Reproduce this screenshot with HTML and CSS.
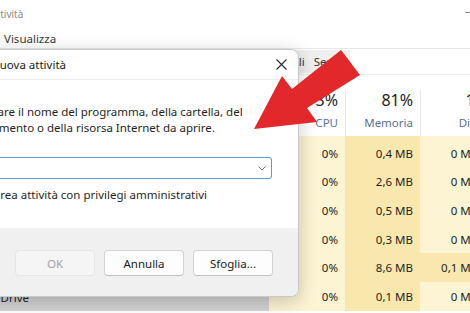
FILE: index.html
```html
<!DOCTYPE html>
<html>
<head>
    <meta charset="utf-8">
    <link rel="stylesheet" href="styles.css">
</head>
<body>
    <div class="screen">
        <div class="taskmgr">
            <div class="titlebar">
                <span class="app-title">attività</span>
                <span class="win-min"></span>
            </div>
            <div class="menubar">
                <span class="menu-item">Visualizza</span>
            </div>
            <div class="tabs">
                <div class="tab-group">
                    <span class="tab">Dettagli</span>
                    <span class="tab">Servizi</span>
                </div>
            </div>
            <div class="proc-table">
                <div class="row head">
                    <div class="cell name"></div>
                    <div class="cell"><span class="pct">3%</span><span class="label">CPU</span></div>
                    <div class="cell"><span class="pct">81%</span><span class="label">Memoria</span></div>
                    <div class="cell"><span class="pct">1%</span><span class="label">Disco</span></div>
                </div>
                <div class="row">
                    <div class="cell name"></div>
                    <div class="cell cpu">0%</div>
                    <div class="cell mem">0,4 MB</div>
                    <div class="cell disk">0 MB/s</div>
                </div>
                <div class="row">
                    <div class="cell name"></div>
                    <div class="cell cpu">0%</div>
                    <div class="cell mem">2,6 MB</div>
                    <div class="cell disk">0 MB/s</div>
                </div>
                <div class="row">
                    <div class="cell name"></div>
                    <div class="cell cpu">0%</div>
                    <div class="cell mem">0,5 MB</div>
                    <div class="cell disk">0 MB/s</div>
                </div>
                <div class="row">
                    <div class="cell name"></div>
                    <div class="cell cpu">0%</div>
                    <div class="cell mem">0,3 MB</div>
                    <div class="cell disk">0 MB/s</div>
                </div>
                <div class="row">
                    <div class="cell name"></div>
                    <div class="cell cpu">0%</div>
                    <div class="cell mem">8,6 MB</div>
                    <div class="cell disk hot">0,1 MB/s</div>
                </div>
                <div class="row selected">
                    <div class="cell name"><span class="proc-name">OneDrive</span></div>
                    <div class="cell cpu">0%</div>
                    <div class="cell mem">0,1 MB</div>
                    <div class="cell disk">0 MB/s</div>
                </div>
            </div>
        </div>

        <div class="dialog">
            <div class="dlg-title">
                <span>Nuova attività</span>
                <svg class="dlg-close" width="11" height="11" viewBox="0 0 11 11">
                    <path d="M0.5 0.5 L10.5 10.5 M10.5 0.5 L0.5 10.5" stroke="#2a2a2a" stroke-width="1.1" fill="none"/>
                </svg>
            </div>
            <div class="dlg-body">
                <p class="prompt">Digitare il nome del programma, della cartella, del documento o della risorsa Internet da aprire.</p>
                <div class="open-row">
                    <label class="open-label" for="run">Apri:</label>
                    <div class="combo" id="run">
                        <svg width="8" height="5" viewBox="0 0 8 5">
                            <path d="M0.5 0.5 L4 4 L7.5 0.5" stroke="#6a6a6a" stroke-width="1" fill="none"/>
                        </svg>
                    </div>
                </div>
                <div class="check-row">
                    <span class="checkbox"></span>
                    <span>Crea attività con privilegi amministrativi</span>
                </div>
            </div>
            <div class="dlg-footer">
                <button class="btn btn-disabled">OK</button>
                <button class="btn">Annulla</button>
                <button class="btn">Sfoglia...</button>
            </div>
        </div>

        <svg class="arrow" width="112" height="84" viewBox="0 0 112 84">
            <polygon points="4,81 32,28 42,41 91,2 110,27 57,60 67,74" fill="#e2282a"/>
        </svg>
    </div>
</body>
</html>
```

FILE: styles.css
```css
body {
    margin: 0;
    font-family: "Noto Sans", "Open Sans", sans-serif;
}
.screen {
    position: relative;
    width: 470px;
    height: 313px;
    overflow: hidden;
    background: #fff;
}

/* task manager behind */
.titlebar {
    height: 28px;
    display: flex;
    align-items: center;
    justify-content: space-between;
}
.app-title {
    font-size: 10px;
    color: #8a8a8a;
    margin-left: -9px;
}
.win-min {
    width: 10px;
    height: 1px;
    background: #8c8c8c;
    margin-right: -5px;
    margin-bottom: 4px;
}
.menubar {
    height: 20px;
    display: flex;
    align-items: center;
    padding-left: 4px;
    border-bottom: 1px solid #e8e8e8;
    font-size: 11.5px;
    color: #3a3a3a;
}
.tabs {
    height: 25px;
    display: flex;
    border-bottom: 1px solid #ececec;
}
.tab-group {
    margin: 1px 0 1px 262px;
    padding-right: 2px;
    background: #efefef;
    display: flex;
    align-items: center;
    gap: 9px;
    font-size: 11.5px;
    color: #333;
}
.proc-table {
    margin-top: 15px;
}
.row {
    display: grid;
    grid-template-columns: 269px 76px 75px 75px;
    height: 28.6px;
}
.row.head {
    height: 46px;
}
.row:nth-child(2) {
    height: 31.6px;
}
.row:nth-child(2) .cell {
    padding-top: 3px;
}
.cell {
    box-sizing: border-box;
    display: flex;
    align-items: center;
    justify-content: flex-end;
    padding-right: 7px;
    font-size: 11.5px;
    color: #1e1e1e;
}
.head .cell {
    flex-direction: column;
    align-items: flex-end;
    justify-content: flex-start;
    border-left: 1px solid #e6e6e6;
}
.head .name {
    border-left: none;
}
.pct {
    font-size: 16px;
    line-height: 20px;
    color: #1e1e1e;
}
.label {
    margin-top: 5px;
    line-height: 16px;
    color: #587298;
}
.cpu { background: #fdf4d3; }
.mem { background: #f8e8ad; }
.disk { background: #fdf4d3; }
.disk.hot { background: #f8e8ad; }
.selected .name {
    background: #d3d3d3;
    align-items: flex-start;
    justify-content: flex-start;
    padding-top: 8px;
}
.proc-name {
    margin-left: -22px;
    line-height: 16px;
}

/* run dialog */
.dialog {
    position: absolute;
    left: -110px;
    top: 49px;
    width: 409px;
    height: 248px;
    box-sizing: border-box;
    border: 1px solid #c9c9c9;
    border-radius: 8px;
    background: #fff;
    display: flex;
    flex-direction: column;
    overflow: hidden;
    box-shadow: 0 4px 18px rgba(0, 0, 0, 0.22);
    font-size: 11.5px;
    color: #1f1f1f;
}
.dlg-title {
    height: 30px;
    box-sizing: border-box;
    border-bottom: 1px solid #ececec;
    display: flex;
    align-items: center;
    justify-content: space-between;
    padding: 0 11px 0 100px;
    color: #1a1a1a;
}
.dlg-body {
    flex: 1;
    padding: 24px 26px 0 20px;
}
.prompt {
    margin: 0 0 0 61px;
    line-height: 16px;
}
.open-row {
    display: flex;
    align-items: center;
    margin-top: 21px;
}
.open-label {
    width: 61px;
    flex-shrink: 0;
}
.combo {
    flex: 1;
    height: 22px;
    box-sizing: border-box;
    border: 1px solid #5d9bd9;
    border-radius: 3px;
    display: flex;
    align-items: center;
    justify-content: flex-end;
    padding-right: 5px;
}
.check-row {
    display: flex;
    align-items: center;
    gap: 8px;
    margin-top: 8px;
    padding-left: 61px;
    line-height: 16px;
}
.checkbox {
    width: 13px;
    height: 13px;
    box-sizing: border-box;
    border: 1px solid #555;
    border-radius: 3px;
}
.dlg-footer {
    height: 68px;
    box-sizing: border-box;
    background: #f0f0f0;
    display: flex;
    justify-content: flex-end;
    align-items: flex-start;
    gap: 9px;
    padding: 22px 25px 0 0;
}
.btn {
    width: 80px;
    height: 26px;
    box-sizing: border-box;
    border: 1px solid #d3d3d3;
    border-bottom-color: #c2c2c2;
    border-radius: 4px;
    background: #fdfdfd;
    font-family: inherit;
    font-size: 11.5px;
    color: #1a1a1a;
    padding: 0;
}
.btn-disabled {
    background: #f5f5f5;
    border-color: #e6e6e6;
    color: #a3a3a3;
}

.arrow {
    position: absolute;
    left: 250px;
    top: 48px;
}
```
